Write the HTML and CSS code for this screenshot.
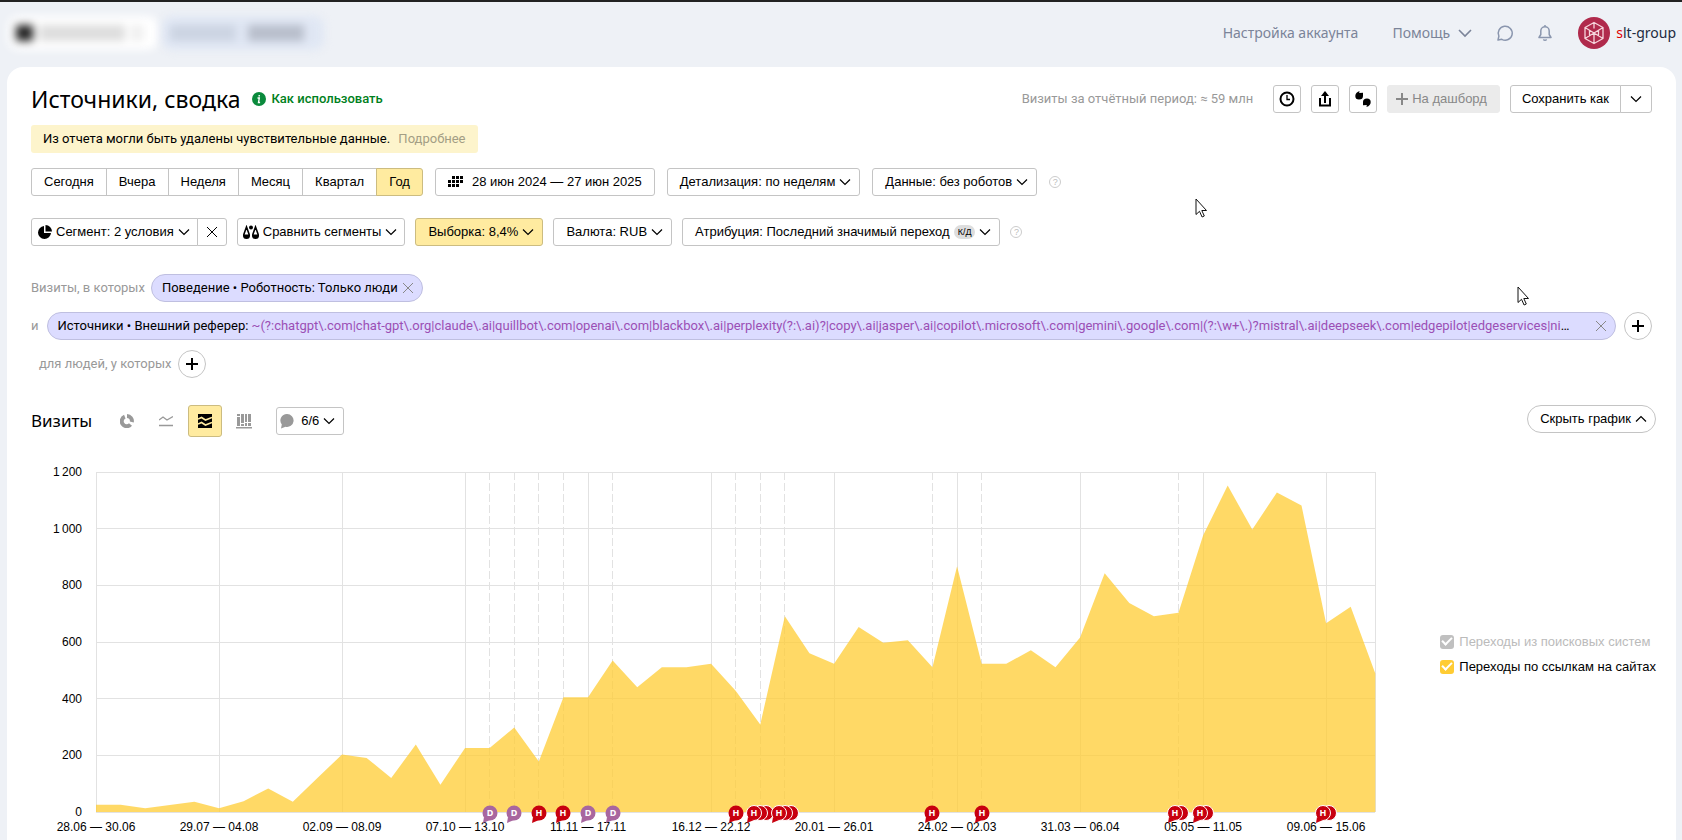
FILE: index.html
```
<!DOCTYPE html>
<html lang="ru">
<head>
    <meta charset="UTF-8">
    <title>Источники, сводка</title>
    <link rel="stylesheet" href="styles.css">
</head>
<body>
    <svg class="sprite">
        <symbol id="down" viewBox="0 0 12 12"><path d="M1 3.500l5 5 5-5" fill="none" stroke="currentColor" stroke-width="1.200"/></symbol>
        <symbol id="up" viewBox="0 0 12 12"><path d="M1 8.500l5-5 5 5" fill="none" stroke="currentColor" stroke-width="1.200"/></symbol>
        <symbol id="cross" viewBox="0 0 12 12"><path d="M1 1l10 10M11 1L1 11" fill="none" stroke="currentColor"/></symbol>
        <symbol id="plus" viewBox="0 0 12 12"><path d="M6 0v12M0 6h12" fill="none" stroke="currentColor" stroke-width="2"/></symbol>
        <symbol id="cursor" viewBox="0 0 13 20"><path d="M1 1v15.500l3.500-3.200 2.600 5.700 2.200-1-2.500-5.500h4.700z" fill="#fff" stroke="#111"/></symbol>
    </svg>

    <header class="header">
        <div class="blurred blurred-white"><i class="blot blot-logo"></i><i class="blot blot-name"></i><i class="blot blot-arrow"></i></div>
        <div class="blurred blurred-blue"><i class="blot blot-label"></i><i class="blot blot-id"></i></div>
        <nav class="nav">
            <a href="#" class="nav-link">Настройка аккаунта</a>
            <a href="#" class="nav-link nav-help">Помощь <svg class="nav-arrow" viewBox="0 0 14 14"><path d="M1 4l6 6 6-6" fill="none" stroke="currentColor" stroke-width="1.600"/></svg></a>
            <button class="nav-btn" aria-label="Чат"><svg width="18" height="18" viewBox="0 0 18 18"><path d="M2 16l.9-3.800A7 7 0 1 1 5.800 15.300z" fill="none" stroke="currentColor" stroke-width="1.500" stroke-linejoin="round"/></svg></button>
            <button class="nav-btn" aria-label="Уведомления"><svg width="16" height="18" viewBox="0 0 16 18"><path d="M2 13.500h12l-1.800-3V7a4.200 4.200 0 0 0-8.400 0v3.500zM8 2.800V1M6.300 15.500q1.700 1.600 3.400 0" fill="none" stroke="currentColor" stroke-width="1.500" stroke-linejoin="round"/></svg></button>
            <a href="#" class="user">
                <svg width="32" height="32" viewBox="0 0 32 32"><circle cx="16" cy="16" r="16" fill="#b02a4c"/><path d="M16 5.500l9 5v11l-9 5-9-5v-11zM16 5.500v6M7 10.500l9 5.500 9-5.500M7 21.500l9-5.500 9 5.500M16 16v10.500M11.500 13.500v5.500M20.500 13.500v5.500" fill="none" stroke="#f6d5dc" stroke-width="1.300" stroke-linejoin="round"/></svg>
                <span><b class="user-first">s</b>lt-group</span>
            </a>
        </nav>
    </header>

    <main class="panel">
        <div class="title-row">
            <h1 class="title">Источники, сводка</h1>
            <a href="#" class="how-to"><svg width="14" height="14" viewBox="0 0 14 14"><circle cx="7" cy="7" r="7" fill="#0a8a3c"/><path d="M5.500 6h1.800l-.8 4.500h1.600M7.200 3v1.500" fill="none" stroke="#fff" stroke-width="1.400"/></svg>Как использовать</a>
            <div class="title-tools">
                <span class="total">Визиты за отчётный период: ≈ 59 млн</span>
                <button class="btn btn-icon" aria-label="История"><svg width="16" height="16" viewBox="0 0 16 16"><circle cx="8" cy="8" r="6.500" fill="none" stroke="#000" stroke-width="2"/><path d="M8 4v4.500h3" fill="none" stroke="#000" stroke-width="1.300"/></svg></button>
                <button class="btn btn-icon" aria-label="Экспорт"><svg width="14" height="16" viewBox="0 0 14 16"><path d="M2 7v7.500h10V7M7 12V3" fill="none" stroke="#000" stroke-width="2"/><path d="M3 5l4-5 4 5z"/></svg></button>
                <button class="btn btn-icon" aria-label="Комментарии"><svg width="16" height="16" viewBox="0 0 16 16"><path d="M4.500 0l-.3 2L8 1.800V5q0 3.500-4 3.500Q.3 8.500.3 5 .3 1.500 4.500 0zM11.500 16l.3-2-3.800.2V11q0-3.500 4-3.500 3.700 0 3.700 3.500 0 3.500-4.200 5z"/></svg></button>
                <button class="btn btn-gray" disabled><svg width="12" height="12"><use href="#plus"/></svg>На дашборд</button>
                <div class="group">
                    <button class="btn btn-save">Сохранить как</button>
                    <button class="btn btn-more" aria-label="Ещё"><svg width="12" height="12"><use href="#down"/></svg></button>
                </div>
            </div>
        </div>

        <div class="notice">Из отчета могли быть удалены чувствительные данные. <a href="#" class="notice-link">Подробнее</a></div>

        <div class="filters filters-period">
            <div class="group">
                <button class="btn">Сегодня</button>
                <button class="btn">Вчера</button>
                <button class="btn">Неделя</button>
                <button class="btn">Месяц</button>
                <button class="btn">Квартал</button>
                <button class="btn active">Год</button>
            </div>
            <button class="btn btn-date"><svg width="16" height="12" viewBox="0 0 16 12"><path d="M4 0h3v3H4zM8 0h3v3H8zM12 0h3v3h-3zM0 4h3v3H0zM4 4h3v3H4zM8 4h3v3H8zM12 4h3v3h-3zM0 8h3v3H0zM4 8h3v3H4zM8 8h3v3H8z"/></svg>28 июн 2024 — 27 июн 2025</button>
            <button class="btn btn-select">Детализация: по неделям <svg width="12" height="12"><use href="#down"/></svg></button>
            <button class="btn btn-select">Данные: без роботов <svg width="12" height="12"><use href="#down"/></svg></button>
            <span class="help">?</span>
        </div>

        <div class="filters">
            <div class="group">
                <button class="btn btn-tight"><svg width="14" height="14" viewBox="0 0 14 14"><path d="M6 1a6.500 6.500 0 1 0 7 7H6z"/><path d="M7.500 0v6.500H14A6.500 6.500 0 0 0 7.500 0z"/></svg>Сегмент: 2 условия <svg width="12" height="12"><use href="#down"/></svg></button>
                <button class="btn btn-reset" aria-label="Сбросить сегмент"><svg width="12" height="12"><use href="#cross"/></svg></button>
            </div>
            <button class="btn btn-compare"><svg width="16" height="14" viewBox="0 0 16 14"><path d="M3.500 2L1 9a2.600 2.600 0 1 0 5 0zM12.500 2L10 9a2.600 2.600 0 1 0 5 0z" fill="none" stroke="#000" stroke-width="1.600"/><path d="M0 9.500h7v1a3.500 3.500 0 0 1-7 0zM9 9.500h7v1a3.500 3.500 0 0 1-7 0z"/><circle cx="8" cy="2.500" r="2"/></svg>Сравнить сегменты <svg width="12" height="12"><use href="#down"/></svg></button>
            <button class="btn btn-select active">Выборка: 8,4% <svg width="12" height="12"><use href="#down"/></svg></button>
            <button class="btn btn-select">Валюта: RUB <svg width="12" height="12"><use href="#down"/></svg></button>
            <button class="btn btn-select">Атрибуция: Последний значимый переход <span class="tag">К/Д</span> <svg width="12" height="12"><use href="#down"/></svg></button>
            <span class="help">?</span>
        </div>

        <div class="conditions">
            <div class="condition">
                <span>Визиты, в которых</span>
                <div class="chip">Поведение • Роботность: Только люди <button class="chip-close" aria-label="Удалить"><svg width="12" height="12"><use href="#cross"/></svg></button></div>
            </div>
            <div class="condition condition-long">
                <span>и</span>
                <div class="chip chip-long">
                    <span class="chip-text">Источники • Внешний реферер: <span class="regexp">~(?:chatgpt\.com|chat-gpt\.org|claude\.ai|quillbot\.com|openai\.com|blackbox\.ai|perplexity(?:\.ai)?|copy\.ai|jasper\.ai|copilot\.microsoft\.com|gemini\.google\.com|(?:\w+\.)?mistral\.ai|deepseek\.com|edgepilot|edgeservices|ni</span>…</span>
                    <button class="chip-close" aria-label="Удалить"><svg width="12" height="12"><use href="#cross"/></svg></button>
                </div>
                <button class="round" aria-label="Добавить условие"><svg width="12" height="12"><use href="#plus"/></svg></button>
            </div>
            <div class="condition people">
                <span>для людей, у которых</span>
                <button class="round" aria-label="Добавить условие"><svg width="12" height="12"><use href="#plus"/></svg></button>
            </div>
        </div>

        <div class="chart-head">
            <h2 class="chart-title">Визиты</h2>
            <div class="views">
                <button class="view" aria-label="Круговая"><svg width="14" height="14" viewBox="0 0 14 14"><path d="M4.800 2.600A5 5 0 1 0 10.500 10.500M7 2A5 5 0 0 1 11.800 8" fill="none" stroke="currentColor" stroke-width="4"/></svg></button>
                <button class="view" aria-label="Линии"><svg width="14" height="14" viewBox="0 0 14 14"><path d="M0 6l4-3 4 3 6-3.500M0 11.500h14" fill="none" stroke="currentColor" stroke-width="1.400"/></svg></button>
                <button class="view active" aria-label="Области"><svg width="14" height="14" viewBox="0 0 14 14"><path d="M0 0h14v14H0z"/><path d="M0 5l3.500-1.500 4 2.500L14 3.500M0 10l3.500-1.500 4 2.500L14 8.500" fill="none" stroke="#ffeba0" stroke-width="1.600"/></svg></button>
                <button class="view" aria-label="Колонки"><svg width="16" height="16" viewBox="0 0 16 16"><path d="M1 1h3v2H1zM1 4h3v9H1zM5 1h3v9H5zM5 11h3v2H5zM9 1h2v8H9zM9 10h2v3H9zM12 1h3v8h-3zM12 10h3v3h-3zM0 14h16v1.500H0z" fill="currentColor"/></svg></button>
            </div>
            <button class="btn btn-notes"><svg width="14" height="16" viewBox="0 0 14 16"><path d="M7 1a6.500 6.500 0 1 1-1.500 12.800L1 15.500l.8-4A6.500 6.500 0 0 1 7 1z" fill="#999"/></svg><span>6/6</span><svg width="12" height="12"><use href="#down"/></svg></button>
            <button class="btn btn-select btn-hide">Скрыть график <svg width="12" height="12"><use href="#up"/></svg></button>
        </div>

        <div class="chart">
            <div class="y-axis"><span>1&thinsp;200</span><span>1&thinsp;000</span><span>800</span><span>600</span><span>400</span><span>200</span><span>0</span></div>
            <div class="plot" id="plot">
                <svg class="plot-svg" id="plotSvg" viewBox="0 0 52 1200" preserveAspectRatio="none"></svg>
            </div>
            <div class="legend">
                <label class="legend-item off"><input type="checkbox" class="check" checked>Переходы из поисковых систем</label>
                <label class="legend-item"><input type="checkbox" class="check" checked>Переходы по ссылкам на сайтах</label>
            </div>
        </div>
    </main>

    <svg class="cursor cursor-one"><use href="#cursor"/></svg>
    <svg class="cursor cursor-two"><use href="#cursor"/></svg>

    <script>
        // Визиты по неделям
        const visits = [26, 26, 13, 25, 36, 13, 38, 83, 36, 120, 203, 191, 120, 238, 96, 226, 226, 298,
            178, 405, 405, 535, 440, 511, 511, 523, 428, 309, 691, 560, 523, 653, 597, 606, 511, 867, 523,
            523, 571, 511, 616, 843, 738, 691, 703, 976, 1152, 997, 1128, 1082, 666, 724, 489];
        const weeks = ['28.06 — 30.06', '29.07 — 04.08', '02.09 — 08.09', '07.10 — 13.10', '11.11 — 17.11',
            '16.12 — 22.12', '20.01 — 26.01', '24.02 — 02.03', '31.03 — 06.04', '05.05 — 11.05', '09.06 — 15.06'];
        // [неделя, буква, количество]
        const notes = [[16, 'D', 1], [17, 'D', 1], [18, 'H', 1], [19, 'H', 1], [20, 'D', 1], [21, 'D', 1],
            [26, 'H', 1], [27, 'H', 3], [28, 'H', 3], [34, 'H', 1], [36, 'H', 1], [44, 'H', 2], [45, 'H', 2], [50, 'H', 2]];

        const plot = document.getElementById('plot');
        const last = visits.length - 1;
        let svg = '';

        for (let y = 0; y <= 1200; y += 200) {
            svg += `<path class="grid" d="M0 ${y}H${last}"/>`;
        }
        for (let x = 0; x <= last; x += 5) {
            svg += `<path class="grid" d="M${x} 0V1200"/>`;
        }
        svg += `<path class="grid" d="M${last} 0V1200"/>`;
        notes.forEach(([x]) => {
            if (x % 5) svg += `<path class="grid dashed" d="M${x} 0V1200"/>`;
        });
        svg += `<path class="area" d="M0 1200L${visits.map((v, i) => `${i} ${1200 - v}`).join('L')}L${last} 1200z"/>`;
        document.getElementById('plotSvg').innerHTML = svg;

        weeks.forEach((text, i) => {
            plot.insertAdjacentHTML('beforeend', `<span class="x-label" style="left: ${i * 5 / last * 100}%">${text}</span>`);
        });

        notes.forEach(([x, letter, count]) => {
            const width = 16 + (count - 1) * 6;
            let pin = '';
            for (let i = count - 1; i >= 0; i--) {
                pin += `<circle cx="${8 + i * 6}" cy="8" r="7.500"/>`;
            }
            plot.insertAdjacentHTML('beforeend', `<div class="pin pin-${letter}" style="left: ${x / last * 100}%">
                <svg width="${width}" height="18" class="${count > 1 ? 'stack' : ''}">${pin}<path d="M2 12l-1 6 7-3z"/><text x="8" y="11">${letter}</text></svg></div>`);
        });
    </script>
</body>
</html>
```
FILE: styles.css
```
* {
    box-sizing: border-box;
}

body {
    margin: 0;
    background: #eef1f6;
    border-top: 2px solid #222;
    font: 13px/20px Roboto, 'Noto Sans', sans-serif;
    color: #000;
    min-height: 100vh;
    display: flex;
    flex-direction: column;
    overflow: hidden;
}

a {
    color: inherit;
    text-decoration: none;
}

button {
    font: inherit;
    color: inherit;
    padding: 0;
    border: 0;
    background: none;
    cursor: pointer;
}

svg {
    flex: none;
}

.sprite {
    display: none;
}

/* Шапка */
.header {
    display: flex;
    align-items: center;
    height: 65px;
    padding: 0 6px 4px 8px;
    font: 14px/20px 'Noto Sans', sans-serif;
}

.blurred {
    display: flex;
    align-items: center;
    height: 34px;
    border-radius: 10px;
    filter: blur(4px);
}

.blurred-white {
    width: 150px;
    background: #fff;
    gap: 6px;
    padding-left: 8px;
}

.blurred-blue {
    width: 162px;
    margin-left: 4px;
    background: #e0e7f4;
    gap: 12px;
    padding-left: 8px;
}

.blot {
    height: 16px;
    background: #ddd;
}

.blot-logo {
    width: 17px;
    background: #222;
}

.blot-name {
    width: 86px;
}

.blot-arrow {
    width: 12px;
    background: #eee;
}

.blot-label {
    width: 66px;
    background: #ccd4e2;
}

.blot-id {
    width: 56px;
    background: #b8becb;
}

.nav {
    margin-left: auto;
    display: flex;
    align-items: center;
    color: #7b8499;
}

.nav-help {
    display: flex;
    align-items: center;
    gap: 8px;
    margin: 0 24px 0 34px;
}

.nav-arrow {
    width: 14px;
    height: 14px;
}

.nav-btn {
    display: flex;
    margin-right: 23px;
    color: #8a96ae;
}

.user {
    display: flex;
    align-items: center;
    gap: 6px;
    margin-left: 2px;
    color: #222b40;
}

.user-first {
    font-weight: 400;
    color: #e00000;
}

/* Основной блок */
.panel {
    flex: 1;
    margin: 0 6px 0 7px;
    padding: 17px 24px 0;
    background: #fff;
    border-radius: 16px 16px 0 0;
}

.title-row {
    display: flex;
    align-items: center;
    height: 30px;
}

.title {
    margin: 0;
    font: 400 23px/30px 'Noto Sans', sans-serif;
}

.how-to {
    display: flex;
    align-items: center;
    gap: 5px;
    margin-left: 12px;
    color: #008020;
    font-weight: 500;
}

.title-tools {
    margin-left: auto;
    display: flex;
    align-items: center;
    gap: 10px;
}

.total {
    margin-right: 10px;
    color: #999;
}

.btn {
    display: flex;
    align-items: center;
    justify-content: center;
    gap: 4px;
    height: 28px;
    padding: 0 12px;
    border: 1px solid #c4c4c4;
    border-radius: 3px;
    background: #fff;
    font: 13px/16px 'Liberation Sans', Arial, sans-serif;
    white-space: nowrap;
}

.btn-icon {
    width: 28px;
    padding: 0;
}

.btn-gray {
    background: #ebebeb;
    border-color: #ebebeb;
    color: #888;
    padding: 0 12px 0 8px;
}

.btn-more {
    padding: 0 9px;
}

.group {
    display: flex;
}

.group .btn {
    border-radius: 0;
}

.group .btn + .btn {
    margin-left: -1px;
}

.group .btn:first-child {
    border-radius: 3px 0 0 3px;
}

.group .btn:last-child {
    border-radius: 0 3px 3px 0;
}

.active,
.btn.active {
    background: #ffeba0;
    border-color: #ccbc80;
}

.notice {
    width: fit-content;
    margin-top: 11px;
    padding: 4px 12px;
    border-radius: 3px;
    background: #fdf4cc;
}

.notice-link {
    margin-left: 5px;
    color: #a39e85;
}

.filters {
    display: flex;
    align-items: center;
    gap: 10px;
    margin-top: 22px;
}

.filters-period {
    gap: 12px;
    margin-top: 15px;
}

.btn-date {
    gap: 8px;
}

.btn-select {
    padding-right: 8px;
}

.btn-tight {
    padding: 0 7px 0 6px;
}

.btn-compare {
    padding: 0 7px 0 5px;
}

.btn-reset {
    padding: 0 8px;
}

.btn-save {
    padding: 0 11px;
}

.tag {
    padding: 0 4px;
    border-radius: 7px;
    background: #ddd;
    font-size: 9px;
    line-height: 14px;
}

.help {
    width: 12px;
    height: 12px;
    border: 1px solid #ccc;
    border-radius: 50%;
    color: #bbb;
    font: 9px/10px 'Liberation Sans', Arial, sans-serif;
    text-align: center;
}

/* Условия сегмента */
.conditions {
    margin-top: 28px;
    display: flex;
    flex-direction: column;
    gap: 10px;
    color: #999;
}

.condition {
    display: flex;
    align-items: center;
    gap: 6px;
    height: 28px;
}

.condition-long {
    gap: 8px;
}

.people {
    padding-left: 8px;
}

.chip {
    display: flex;
    align-items: center;
    gap: 4px;
    height: 28px;
    padding: 0 8px 0 10px;
    border: 1px solid #bfbfe0;
    border-radius: 14px;
    background: #dcdcff;
    color: #000;
    white-space: nowrap;
}

.chip-long {
    flex: 1;
    min-width: 0;
    gap: 12px;
}

.chip-text {
    flex: 1;
    overflow: hidden;
    text-overflow: ellipsis;
}

.regexp {
    color: #9b4fb5;
}

.chip-close {
    display: flex;
    color: #888;
}

.round {
    display: flex;
    align-items: center;
    justify-content: center;
    flex: none;
    width: 28px;
    height: 28px;
    border: 1px solid #c4c4c4;
    border-radius: 50%;
    background: #fff;
    color: #000;
}

/* График */
.chart-head {
    display: flex;
    align-items: center;
    height: 32px;
    margin-top: 27px;
}

.chart-title {
    margin: 0 18px 0 0;
    font: 400 17px/24px 'Noto Sans', sans-serif;
}

.views {
    display: flex;
    gap: 5px;
}

.view {
    display: flex;
    align-items: center;
    justify-content: center;
    width: 34px;
    height: 32px;
    border: 1px solid transparent;
    border-radius: 3px;
    color: #999;
}

.view.active {
    border-color: #ccbc80;
    color: #000;
}

.btn-notes {
    margin-left: 15px;
    padding: 0 8px 0 3px;
}

.btn-notes span {
    margin-left: 3px;
}

.btn-hide {
    margin: 0 -4px 4px auto;
    border-radius: 14px;
}

.chart {
    display: flex;
    height: 340px;
    margin-top: 35px;
    font: 12px/14px 'Liberation Sans', Arial, sans-serif;
}

.y-axis {
    display: flex;
    flex-direction: column;
    justify-content: space-between;
    width: 51px;
    margin: -7px 14px -7px 0;
    text-align: right;
}

.plot {
    position: relative;
    flex: 1;
}

.plot-svg {
    display: block;
    width: 100%;
    height: 100%;
    overflow: visible;
}

.grid {
    fill: none;
    stroke: #e2e2e2;
    vector-effect: non-scaling-stroke;
    shape-rendering: crispEdges;
}

.dashed {
    stroke-dasharray: 8 3;
}

.area {
    fill: #ffcc33;
    fill-opacity: 0.75;
}

.x-label {
    position: absolute;
    top: 100%;
    margin-top: 8px;
    transform: translateX(-50%);
    white-space: nowrap;
}

.pin {
    position: absolute;
    top: 100%;
    margin-top: -7px;
    transform: translateX(-50%);
    font: bold 9px/9px 'Noto Sans', sans-serif;
}

.pin svg {
    display: block;
}

.pin text {
    fill: #fff;
    text-anchor: middle;
}

.pin-D {
    fill: #a8669f;
}

.pin-H {
    fill: #c8000f;
}

.stack circle {
    stroke: #fff;
}

.legend {
    align-self: center;
    display: flex;
    flex-direction: column;
    gap: 9px;
    margin: 24px -4px 0 65px;
    font-size: 13px;
    line-height: 16px;
}

.legend-item {
    display: flex;
    align-items: center;
    gap: 5px;
}

.check {
    appearance: none;
    display: grid;
    place-items: center;
    width: 14px;
    height: 14px;
    margin: 0;
    border-radius: 3px;
    background: #ffcc33;
}

.check:checked::before {
    content: '';
    width: 8px;
    height: 4px;
    margin-bottom: 3px;
    border: solid #fff;
    border-width: 0 0 2px 2px;
    transform: rotate(-45deg);
}

.off {
    color: #bbb;
}

.off .check {
    background: #c0c0c0;
}

/* Указатели мыши поверх страницы */
.cursor {
    position: absolute;
    width: 13px;
    height: 20px;
}

.cursor-one {
    left: 1195px;
    top: 198px;
}

.cursor-two {
    left: 1517px;
    top: 286px;
}
```
